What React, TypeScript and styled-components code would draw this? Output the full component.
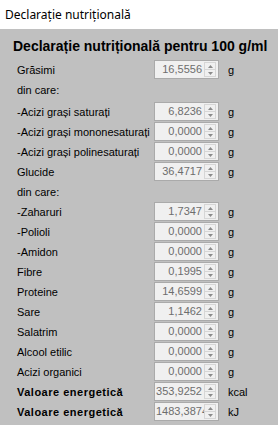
import React from "react";
import styled, { createGlobalStyle } from "styled-components";

const Global = createGlobalStyle`
  html, body { margin: 0; padding: 0; background: #c0c0c0; }
  body { width: 278px; height: 425px; overflow: hidden; }
  #root { width: 278px; height: 425px; }
`;

const Window = styled.div`
  width: 278px;
  height: 425px;
  display: flex;
  flex-direction: column;
  background: #c0c0c0;
`;

const TitleBar = styled.div`
  height: 29px;
  background: #ffffff;
  display: flex;
  align-items: center;
  padding-left: 5px;
  padding-bottom: 1px;
  box-sizing: border-box;
  font-family: "Segoe UI", "Noto Sans", "Open Sans", sans-serif;
  font-size: 12px;
  color: #000;
`;

const Panel = styled.div`
  flex: 1;
  padding: 9px 0 0 0;
  display: flex;
  flex-direction: column;
`;

const Heading = styled.div`
  font-family: "Liberation Sans", Arial, sans-serif;
  font-weight: bold;
  font-size: 14px;
  line-height: 16px;
  color: #000;
  padding-left: 13px;
  white-space: nowrap;
  margin-bottom: 6px;
`;

const Grid = styled.div`
  display: grid;
  grid-template-columns: 137px 65px auto;
  grid-template-rows: 20px 22px;
  grid-auto-rows: 20px;
  padding-left: 17px;
`;

const Label = styled.div<{ $bold?: boolean }>`
  font-family: "Liberation Sans", Arial, sans-serif;
  font-size: 11px;
  font-weight: ${(p) => (p.$bold ? "bold" : "normal")};
  letter-spacing: ${(p) => (p.$bold ? "0.5px" : "0")};
  color: #000;
  height: 19px;
  display: flex;
  align-items: center;
  white-space: nowrap;
  overflow: visible;
  grid-column: 1;
`;

const Spin = styled.div`
  grid-column: 2;
  height: 19px;
  box-sizing: border-box;
  border: 1px solid #aaaaaa;
  background: #f0f0f0;
  display: flex;
  align-items: stretch;
`;

const Value = styled.div`
  flex: 1;
  min-width: 0;
  overflow: hidden;
  white-space: nowrap;
  text-align: right;
  font-family: "Liberation Sans", Arial, sans-serif;
  font-size: 11px;
  line-height: 17px;
  color: #6d6d6d;
  padding-right: 2px;
  padding-left: 1px;
`;

const Buttons = styled.div`
  width: 12px;
  margin: 1px 2px 1px 0;
  display: flex;
  flex-direction: column;
  border: 1px solid #d6d6d6;
  box-sizing: border-box;
`;

const Arrow = styled.div<{ $down?: boolean }>`
  flex: 1;
  display: flex;
  align-items: center;
  justify-content: center;
  border-top: ${(p) => (p.$down ? "1px solid #d6d6d6" : "none")};
`;

const Unit = styled.div`
  grid-column: 3;
  padding-left: 9px;
  font-family: "Liberation Sans", Arial, sans-serif;
  font-size: 11px;
  color: #000;
  height: 19px;
  display: flex;
  align-items: center;
`;

type Row =
  | { label: string; value: string; unit: string; bold?: boolean }
  | { label: string; sub: true };

const rows: Row[] = [
  { label: "Grăsimi", value: "16,5556", unit: "g" },
  { label: "din care:", sub: true },
  { label: "-Acizi grași saturați", value: "6,8236", unit: "g" },
  { label: "-Acizi grași mononesaturați", value: "0,0000", unit: "g" },
  { label: "-Acizi grași polinesaturați", value: "0,0000", unit: "g" },
  { label: "Glucide", value: "36,4717", unit: "g" },
  { label: "din care:", sub: true },
  { label: "-Zaharuri", value: "1,7347", unit: "g" },
  { label: "-Polioli", value: "0,0000", unit: "g" },
  { label: "-Amidon", value: "0,0000", unit: "g" },
  { label: "Fibre", value: "0,1995", unit: "g" },
  { label: "Proteine", value: "14,6599", unit: "g" },
  { label: "Sare", value: "1,1462", unit: "g" },
  { label: "Salatrim", value: "0,0000", unit: "g" },
  { label: "Alcool etilic", value: "0,0000", unit: "g" },
  { label: "Acizi organici", value: "0,0000", unit: "g" },
  { label: "Valoare energetică", value: "353,9252", unit: "kcal", bold: true },
  { label: "Valoare energetică", value: "1483,3874", unit: "kJ", bold: true },
];

const Tri = ({ down }: { down?: boolean }) => (
  <svg width="5" height="3" viewBox="0 0 5 3">
    {down ? (
      <polygon points="0,0 5,0 2.5,3" fill="#8a8a8a" />
    ) : (
      <polygon points="0,3 5,3 2.5,0" fill="#8a8a8a" />
    )}
  </svg>
);

export default function App() {
  return (
    <>
      <Global />
      <Window>
        <TitleBar>Declarație nutrițională</TitleBar>
        <Panel>
          <Heading>Declarație nutrițională pentru 100 g/ml</Heading>
          <Grid>
            {rows.map((r, i) =>
              "sub" in r ? (
                <Label key={i}>{r.label}</Label>
              ) : (
                <React.Fragment key={i}>
                  <Label $bold={r.bold}>{r.label}</Label>
                  <Spin>
                    <Value>{r.value}</Value>
                    <Buttons>
                      <Arrow>
                        <Tri />
                      </Arrow>
                      <Arrow $down>
                        <Tri down />
                      </Arrow>
                    </Buttons>
                  </Spin>
                  <Unit>{r.unit}</Unit>
                </React.Fragment>
              )
            )}
          </Grid>
        </Panel>
      </Window>
    </>
  );
}
